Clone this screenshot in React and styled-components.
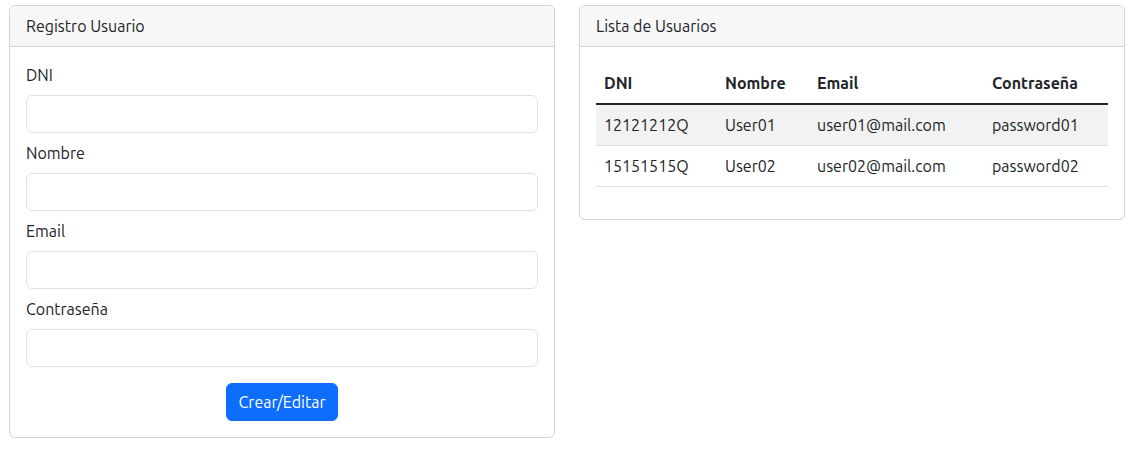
import React from 'react'
import styled, { createGlobalStyle } from 'styled-components'

const GlobalStyle = createGlobalStyle`
  body {
    margin: 0;
    font-family: Ubuntu, "Noto Sans", "Liberation Sans", sans-serif;
    font-size: 16px;
    line-height: 1.5;
    color: #212529;
    background: #fff;
  }
  * { box-sizing: border-box; }
`

const users = [
  { dni: '12121212Q', nombre: 'User01', email: 'user01@mail.com', password: 'password01' },
  { dni: '15151515Q', nombre: 'User02', email: 'user02@mail.com', password: 'password02' },
]

const fields = ['DNI', 'Nombre', 'Email', 'Contraseña']

export default function App() {
  return (
    <>
      <GlobalStyle />
      <Page>
        <Card>
          <CardHeader>Registro Usuario</CardHeader>
          <CardBody>
            <Form onSubmit={(e) => e.preventDefault()}>
              {fields.map((f) => (
                <Field key={f}>
                  <Label>{f}</Label>
                  <Input type={f === 'Contraseña' ? 'password' : 'text'} />
                </Field>
              ))}
              <Actions>
                <Button type="submit">Crear/Editar</Button>
              </Actions>
            </Form>
          </CardBody>
        </Card>
        <Card>
          <CardHeader>Lista de Usuarios</CardHeader>
          <CardBody>
            <Table>
              <colgroup>
                <col style={{ width: '121px' }} />
                <col style={{ width: '92px' }} />
                <col style={{ width: '175px' }} />
                <col />
              </colgroup>
              <thead>
                <tr>
                  {fields.map((f) => <Th key={f}>{f}</Th>)}
                </tr>
              </thead>
              <tbody>
                {users.map((u, i) => (
                  <Row key={u.dni} $striped={i % 2 === 0}>
                    <Td>{u.dni}</Td>
                    <Td>{u.nombre}</Td>
                    <Td>{u.email}</Td>
                    <Td>{u.password}</Td>
                  </Row>
                ))}
              </tbody>
            </Table>
          </CardBody>
        </Card>
      </Page>
    </>
  )
}

const Page = styled.div`
  display: flex;
  align-items: flex-start;
  gap: 24px;
  padding: 5px 4px 0 9px;
`

const Card = styled.div`
  flex: 1;
  border: 1px solid #d3d4d5;
  border-radius: 6px;
  background: #fff;
  overflow: hidden;
`

const CardHeader = styled.div`
  padding: 8px 16px;
  background: #f7f7f7;
  border-bottom: 1px solid #d3d4d5;
  font-size: 16px;
`

const CardBody = styled.div`
  padding: 16px;
`

const Form = styled.form`
  display: flex;
  flex-direction: column;
`

const Field = styled.div`
  display: flex;
  flex-direction: column;
  margin-bottom: 8px;
`

const Label = styled.label`
  margin-bottom: 8px;
`

const Input = styled.input`
  height: 38px;
  padding: 6px 12px;
  font: inherit;
  border: 1px solid #dee2e6;
  border-radius: 6px;
  outline: none;
`

const Actions = styled.div`
  display: flex;
  justify-content: center;
  margin-top: 8px;
`

const Button = styled.button`
  height: 38px;
  padding: 6px 12px;
  font: inherit;
  color: #fff;
  background: #0d6efd;
  border: 1px solid #0d6efd;
  border-radius: 6px;
  cursor: pointer;
`

const Table = styled.table`
  width: 100%;
  border-collapse: collapse;
  table-layout: fixed;
  margin-bottom: 16px;
`

const Th = styled.th`
  text-align: left;
  font-weight: 700;
  padding: 8px;
  border-bottom: 2px solid #212529;
`

const Row = styled.tr`
  background: ${(p) => (p.$striped ? '#f2f2f2' : 'transparent')};
`

const Td = styled.td`
  padding: 8px;
  border-bottom: 1px solid #dee2e6;
`
